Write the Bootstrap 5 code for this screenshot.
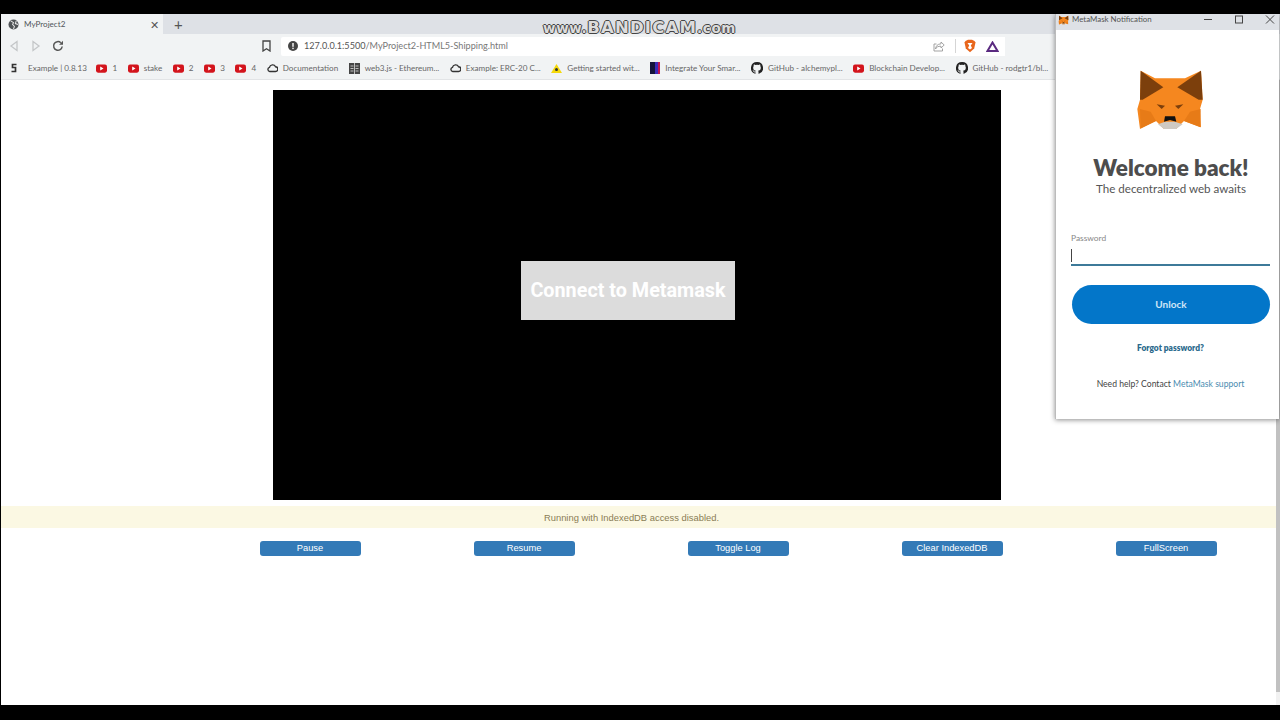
<!DOCTYPE html>
<html lang="en">
<head>
  <meta charset="UTF-8">
  <title>MyProject2</title>
  <link href="https://cdn.jsdelivr.net/npm/bootstrap@5.3.0/dist/css/bootstrap.min.css" rel="stylesheet">
  <style>
    html, body { height: 720px; overflow: hidden; background: #000; }
    body { padding-top: 14px; font-family: Lato, "Open Sans", sans-serif; }
    .browser { margin-left: 1px; height: 691px; background: #fff; }

    .tab-strip { height: 20px; background: #dee1e6; flex: none; }
    .tab-active { width: 162px; height: 20px; padding: 0 4px 0 7px; background: #f1f3f4; font-size: 8.1px; color: #50555a; }
    .tab-title { margin-left: 5px; }
    .tab-close { font-size: 11px; color: #555; line-height: 1; }
    .tab-plus { margin-left: 11px; font-size: 15px; line-height: 1; color: #555; }

    .tool-bar { height: 24px; background: #f1f3f4; flex: none; padding-left: 2px; }
    .tool-btn { width: 22px; }
    .url-pill { width: 724px; height: 19px; margin-left: 10px; padding: 0 1px 0 7px; background: #fff; font-size: 9.1px; color: #777; border-radius: 2px 0 0 2px; }
    .url-text { margin-left: 6px; }
    .url-host { color: #555; }
    .bookmark-btn { margin-left: 193px; }
    .url-sep { height: 14px; width: 1px; margin: 0 4px 0 10px; background: #d5d5d5; }
    .url-brave { margin-left: 4px; }
    .url-prism { margin-left: 10px; margin-right: 5px; }

    .bookmark-bar { height: 22px; background: #f1f3f4; flex: none; padding-left: 10px; border-bottom: 1px solid #e2e4e6; font-size: 8.1px; color: #666; white-space: nowrap; overflow: hidden; }
    .bm-item { margin-right: 10.6px; gap: 5px; }
    .bm-first { gap: 11px; margin-right: 9.500px; }

    .page-wrap { min-height: 0; }
    .page-col { padding-top: 10px; }
    .game-canvas { width: 728px; height: 410px; margin-left: 272px; background: #000; position: relative; }
    .connect-btn { position: absolute; left: 248px; top: 171px; width: 214px; height: 59px; padding: 0; border: 0; border-radius: 0; background: #dcdcdc; color: #fff; font: 700 19.8px Roboto, sans-serif; }
    .db-notice { height: 22px; margin: 6px 0 0; padding: 0 14px 0 0; border: 0; border-radius: 0; background: #fbf8e3; color: #8a7d55; font: 9.4px "Liberation Sans", Arial, sans-serif; }
    .ctrl-row { margin-top: 13px; padding-left: 202px; }
    .ctrl-cell { width: 214px; text-align: center; }
    .ctrl-btn { width: 101px; height: 15px; padding: 0; border: 0; border-radius: 3px; background: #337ab7; color: #fff; font: 9.3px/15px "Liberation Sans", Arial, sans-serif; display: block; margin: 0 auto; }
    .v-scroll { width: 4px; flex: none; background: #c1c1c1; }
    .v-scroll-end { height: 13px; background: #f1f1f1; }

    .mm-window { position: absolute; left: 1055px; top: 14px; width: 224px; height: 405px; background: #fff; border: 0; border-left: 1px solid #bbb; border-radius: 0; box-shadow: 0 1px 5px rgba(0,0,0,.45); font-family: Lato, "Open Sans", sans-serif; }
    .mm-title { height: 16px; background: #dee1e6; padding: 0 0 5px 0; font-size: 7.9px; color: #555; flex: none; gap: 13px; }
    .mm-title-text { margin-left: -12px; }
    .win-ctrl { width: 18px; height: 11px; color: #444; }
    .mm-fox { margin: 29px auto 0 64px; display: block; filter: blur(.5px); }
    .mm-welcome { margin: 16px 0 0 36px; width: 158px; font: 800 22.5px/26px Lato, sans-serif; color: #4d4d4d; white-space: nowrap; text-align: center; }
    .mm-sub { margin: -1px 0 0 36px; width: 158px; font-size: 11.6px; color: #555; text-align: center; white-space: nowrap; }
    .mm-form { margin: 35px 9px 0 15px; }
    .mm-label { font-size: 8.4px; color: #888; margin: 0; line-height: 12px; display: block; }
    .mm-input { height: 20px; margin-top: 2px; padding: 0; border: 0; border-bottom: 2px solid #3d7a99; border-radius: 0; box-shadow: none; position: relative; }
    .mm-caret { position: absolute; left: 0; top: 3px; width: 1px; height: 13px; background: #444; }
    .mm-unlock { width: 198px; height: 39px; margin: 19px 0 0 1px; padding: 0; border: 0; background: #0376c9; color: #cfe6f7; font-size: 10px; font-weight: 700; }
    .mm-forgot { margin-top: 18px; font-size: 8.4px; font-weight: 800; color: #2b6a8c; text-align: center; line-height: 12px; }
    .mm-help { margin-top: 24px; font-size: 8.6px; color: #444; text-align: center; line-height: 12px; }
    .mm-help a { color: #4b8cb0; text-decoration: none; }

    .bandicam { position: absolute; left: 521px; top: 18px; width: 237px; font: 700 13.5px/20px "DejaVu Sans", sans-serif; letter-spacing: .6px; color: #dcdcdc; text-shadow: -1px 0 #444, 1px 0 #444, 0 -1px #444, 0 1px #444; white-space: nowrap; text-align: center; }
    .bandicam b { font-size: 16.5px; letter-spacing: 1.2px; }
  </style>
</head>
<body>

<svg width="0" height="0" class="position-absolute">
  <symbol id="yt" viewBox="0 0 12 9"><rect width="12" height="9" rx="2.2" fill="#d3141c"/><path d="M4.6 2.4 8.2 4.5 4.6 6.6z" fill="#fff"/></symbol>
  <symbol id="cloud" viewBox="0 0 12 10"><path d="M3 8.8a2.3 2.3 0 0 1-.3-4.5A3.5 3.5 0 0 1 9.3 3.6a2.6 2.6 0 0 1-.2 5.2z" fill="none" stroke="#333" stroke-width="1.5"/></symbol>
  <symbol id="gh" viewBox="0 0 16 16"><path d="M8 0a8 8 0 0 0-2.5 15.6c.4.1.5-.2.5-.4v-1.4c-2.2.5-2.7-1-2.7-1-.4-.9-.9-1.2-.9-1.2-.7-.5.1-.5.1-.5.8.1 1.2.8 1.2.8.7 1.2 1.9.9 2.3.7.1-.5.3-.9.5-1.1-1.8-.2-3.6-.9-3.6-4 0-.9.3-1.6.8-2.1-.1-.2-.4-1 .1-2.1 0 0 .7-.2 2.2.8a7.6 7.6 0 0 1 4 0c1.5-1 2.2-.8 2.2-.8.5 1.1.2 1.9.1 2.1.5.5.8 1.2.8 2.1 0 3.1-1.9 3.8-3.7 4 .3.3.6.8.6 1.5v2.2c0 .2.1.5.6.4A8 8 0 0 0 8 0z" fill="#222"/></symbol>
  <symbol id="foxface" viewBox="0 0 300 240">
    <path d="M62 35 105 58H195L243 35 248 122 240 150 243 205 192 186 168 210H132L108 186 60 210 52 150 60 122z" fill="#f5871f"/>
    <path d="M60 150 92 158 108 186 62 208z" fill="#e77b17"/>
    <path d="M242 150 210 158 192 186 241 205z" fill="#e77b17"/>
    <path d="M62 35 130 85 68 122 60 122z" fill="#7c3f0c"/>
    <path d="M243 35 172 85 236 122 248 122z" fill="#7c3f0c"/>
    <path d="M110 136 135 140 125 150z" fill="#7c3f0c"/>
    <path d="M190 136 165 140 175 150z" fill="#7c3f0c"/>
    <path d="M114 196 135 188H165L188 196 168 210H132z" fill="#cfcac3"/>
    <path d="M135 172H165L169 188 150 183 132 188z" fill="#111"/>
  </symbol>
</svg>

<div class="browser d-flex flex-column">
  <div class="tab-strip d-flex align-items-center">
    <div class="tab-active d-flex align-items-center">
      <svg width="11" height="11" viewBox="0 0 12 12"><circle cx="6" cy="6" r="5.5" fill="#4f5356"/><path d="M3 2 6 4 5 6 7 8 6 11M9 2 8 5 11 6" fill="none" stroke="#e8e8e8" stroke-width="1.1"/></svg>
      <span class="tab-title flex-grow-1">MyProject2</span>
      <span class="tab-close">✕</span>
    </div>
    <span class="tab-plus">+</span>
  </div>

  <div class="tool-bar d-flex align-items-center">
    <span class="tool-btn d-flex justify-content-center"><svg width="10" height="12" viewBox="0 0 10 12"><path d="M8 1.5 2 6l6 4.5z" fill="none" stroke="#c4c6c8" stroke-width="1.3"/></svg></span>
    <span class="tool-btn d-flex justify-content-center"><svg width="10" height="12" viewBox="0 0 10 12"><path d="M2 1.5 8 6l-6 4.5z" fill="none" stroke="#c4c6c8" stroke-width="1.3"/></svg></span>
    <span class="tool-btn d-flex justify-content-center"><svg width="12" height="12" viewBox="0 0 12 12"><path d="M10.2 6.5A4.3 4.3 0 1 1 8.8 2.7" fill="none" stroke="#555" stroke-width="1.5"/><path d="M11 .8v3.900H7.100z" fill="#555"/></svg></span>
    <svg class="bookmark-btn" width="9" height="12" viewBox="0 0 9 12"><path d="M1 1h7v10L4.500 8.700 1 11z" fill="none" stroke="#444" stroke-width="1.300"/></svg>
    <div class="url-pill d-flex align-items-center">
      <svg width="10" height="10" viewBox="0 0 10 10"><circle cx="5" cy="5" r="5" fill="#444"/><rect x="4.3" y="2" width="1.4" height="3.8" fill="#fff"/><rect x="4.3" y="6.7" width="1.4" height="1.4" fill="#fff"/></svg>
      <span class="url-text flex-grow-1"><span class="url-host">127.0.0.1:5500</span>/MyProject2-HTML5-Shipping.html</span>
      <svg width="12" height="11" viewBox="0 0 12 11"><path d="M8 1l3.2 3L8 7V5.2C5 5.2 3.5 6 2.5 8 2.8 5 4.5 3 8 2.8zM9.5 7.5V10H1V3h2.500" fill="none" stroke="#999" stroke-width=".9"/></svg>
      <span class="url-sep"></span>
      <svg class="url-brave" width="12" height="14" viewBox="0 0 12 14"><path d="M1.5 2 4 .7h4L10.5 2l1 1.5-1.3 6L6 13.3 1.8 9.5.5 3.5z" fill="#e8661c"/><path d="M3.5 4h5L6.8 6.5 8 9 6 10.5 4 9l1.2-2.5z" fill="#fff"/></svg>
      <svg class="url-prism" width="13" height="11" viewBox="0 0 13 11"><path d="M6.5 1.5 11.5 10h-10z" fill="none" stroke="#5a2a80" stroke-width="2"/></svg>
    </div>
  </div>

  <div class="bookmark-bar d-flex align-items-center">
    <span class="bm-item bm-first d-flex align-items-center"><svg width="6" height="10" viewBox="0 0 6 10"><path d="M5.5 1.5H1.5v3h3v4H.5" fill="none" stroke="#333" stroke-width="1.7"/></svg>Example | 0.8.13</span>
    <span class="bm-item d-flex align-items-center"><svg width="11" height="9"><use href="#yt"/></svg>1</span>
    <span class="bm-item d-flex align-items-center"><svg width="11" height="9"><use href="#yt"/></svg>stake</span>
    <span class="bm-item d-flex align-items-center"><svg width="11" height="9"><use href="#yt"/></svg>2</span>
    <span class="bm-item d-flex align-items-center"><svg width="11" height="9"><use href="#yt"/></svg>3</span>
    <span class="bm-item d-flex align-items-center"><svg width="11" height="9"><use href="#yt"/></svg>4</span>
    <span class="bm-item d-flex align-items-center"><svg width="11" height="10"><use href="#cloud"/></svg>Documentation</span>
    <span class="bm-item d-flex align-items-center"><svg width="11" height="11" viewBox="0 0 11 11"><rect width="11" height="11" fill="#444"/><path d="M5.5 0v11M1.5 3h3M1.5 5.5h3M1.5 8h3M6.5 3h3M6.5 5.5h3M6.5 8h3" stroke="#ddd" stroke-width=".8"/></svg>web3.js - Ethereum...</span>
    <span class="bm-item d-flex align-items-center"><svg width="11" height="10"><use href="#cloud"/></svg>Example: ERC-20 C...</span>
    <span class="bm-item d-flex align-items-center"><svg width="11" height="9" viewBox="0 0 11 9"><path d="M5.5 0 11 9H0z" fill="#f5d90a"/><circle cx="5.5" cy="5.5" r="1.5" fill="#333"/></svg>Getting started wit...</span>
    <span class="bm-item d-flex align-items-center"><svg width="10" height="12" viewBox="0 0 10 12"><rect width="10" height="12" fill="#14143c"/><rect x="5" width="3" height="12" fill="#3a2bb8"/><rect x="8" width="2" height="12" fill="#c01550"/></svg>Integrate Your Smar...</span>
    <span class="bm-item d-flex align-items-center"><svg width="12" height="12"><use href="#gh"/></svg>GitHub - alchemypl...</span>
    <span class="bm-item d-flex align-items-center"><svg width="11" height="9"><use href="#yt"/></svg>Blockchain Develop...</span>
    <span class="bm-item d-flex align-items-center"><svg width="12" height="12"><use href="#gh"/></svg>GitHub - rodgtr1/bl...</span>
  </div>

  <div class="page-wrap d-flex flex-grow-1">
    <div class="page-col flex-grow-1">
      <div class="game-canvas">
        <button class="btn connect-btn" type="button">Connect to Metamask</button>
      </div>
      <div class="alert db-notice d-flex align-items-center justify-content-center">Running with IndexedDB access disabled.</div>
      <div class="ctrl-row d-flex">
        <div class="ctrl-cell"><button class="btn ctrl-btn" type="button">Pause</button></div>
        <div class="ctrl-cell"><button class="btn ctrl-btn" type="button">Resume</button></div>
        <div class="ctrl-cell"><button class="btn ctrl-btn" type="button">Toggle Log</button></div>
        <div class="ctrl-cell"><button class="btn ctrl-btn" type="button">Clear IndexedDB</button></div>
        <div class="ctrl-cell"><button class="btn ctrl-btn" type="button">FullScreen</button></div>
      </div>
    </div>
    <div class="v-scroll d-flex flex-column justify-content-end"><div class="v-scroll-end"></div></div>
  </div>
</div>

<div class="bandicam">www.<b>BANDICAM</b>.com</div>

<div class="card mm-window">
  <div class="mm-title d-flex align-items-center">
    <svg width="15" height="12"><use href="#foxface"/></svg>
    <span class="mm-title-text flex-grow-1">MetaMask Notification</span>
    <svg class="win-ctrl" viewBox="0 0 18 11"><path d="M5 5.5h8" stroke="#444" stroke-width="1"/></svg>
    <svg class="win-ctrl" viewBox="0 0 18 11"><rect x="5.5" y="2" width="7" height="7" fill="none" stroke="#444"/></svg>
    <svg class="win-ctrl" viewBox="0 0 18 11"><path d="M5 1.5l8 8M13 1.5l-8 8" stroke="#444" fill="none"/></svg>
  </div>
  <svg class="mm-fox" width="100" height="80"><use href="#foxface"/></svg>
  <div class="mm-welcome">Welcome back!</div>
  <div class="mm-sub">The decentralized web awaits</div>
  <div class="mm-form">
    <label class="mm-label">Password</label>
    <div class="mm-input"><span class="mm-caret"></span></div>
    <button class="btn rounded-pill mm-unlock" type="button">Unlock</button>
    <div class="mm-forgot">Forgot password?</div>
    <div class="mm-help">Need help? Contact <a href="#">MetaMask support</a></div>
  </div>
</div>

<script src="https://cdn.jsdelivr.net/npm/bootstrap@5.3.0/dist/js/bootstrap.bundle.min.js"></script>
</body>
</html>
